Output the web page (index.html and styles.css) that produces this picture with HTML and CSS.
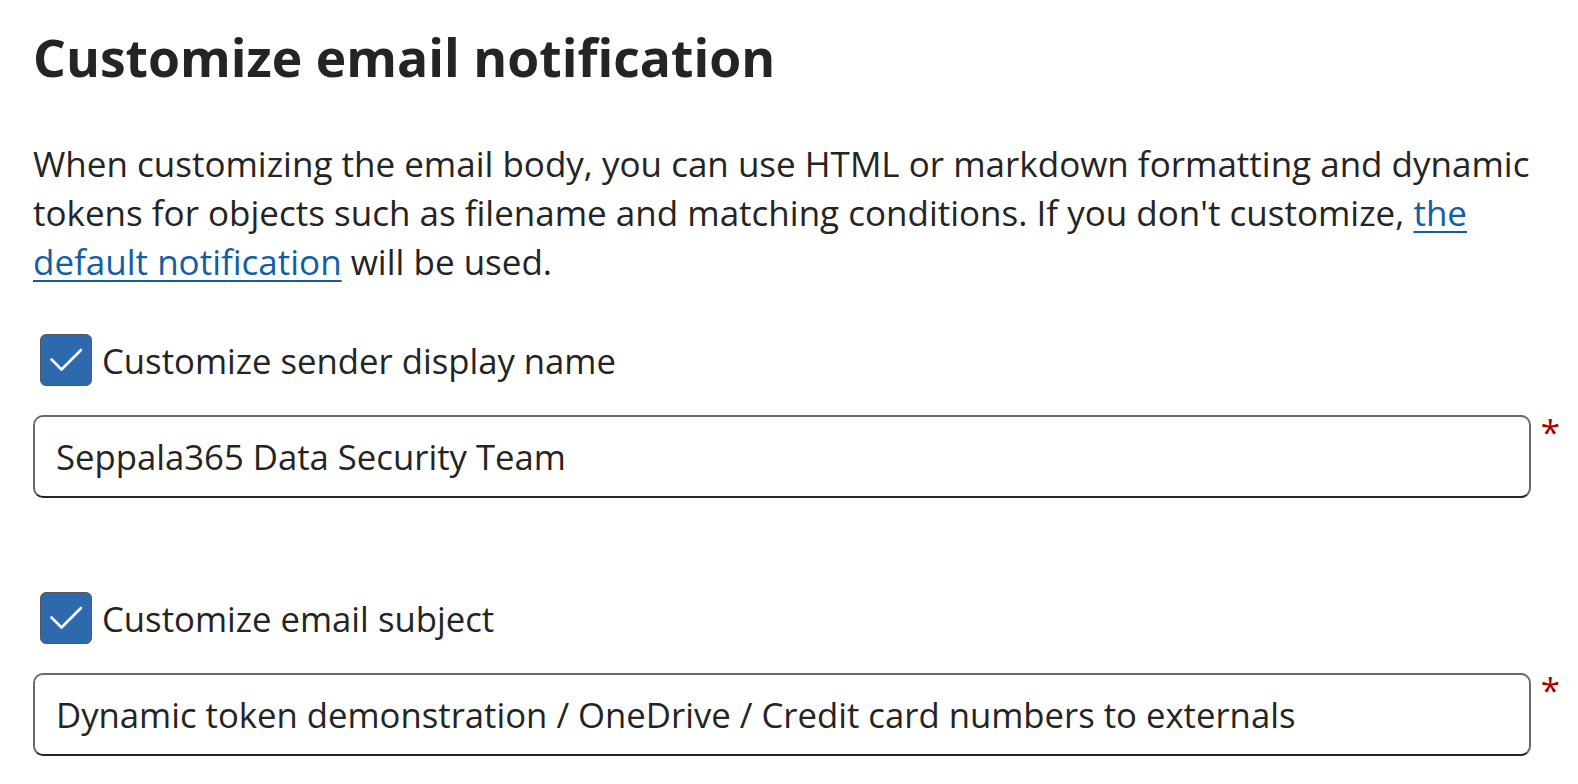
FILE: index.html
```html
<!DOCTYPE html>
<html lang="en">
<head>
<meta charset="utf-8">
<title>Customize email notification</title>
<link rel="stylesheet" href="styles.css">
</head>
<body>
<main class="page">
  <h1 class="title">Customize email notification</h1>
  <p class="intro">When customizing the email body, you can use HTML or markdown formatting and dynamic tokens for objects such as filename and matching conditions. If you don't customize, <a class="link" href="#">the</a> <a class="link" href="#">default notification</a> will be used.</p>

  <label class="check-row">
    <span class="checkbox">
      <svg viewBox="0 0 52 52" width="52" height="52" aria-hidden="true"><path d="M11.5 25.5 L21.5 35.5 L41 16" fill="none" stroke="#ffffff" stroke-width="2.6" stroke-linecap="round" stroke-linejoin="round"/></svg>
    </span>
    <span class="check-label">Customize sender display name</span>
  </label>
  <div class="field">
    <div class="input">Seppala365 Data Security Team</div>
    <span class="required">*</span>
  </div>

  <label class="check-row check-row-second">
    <span class="checkbox">
      <svg viewBox="0 0 52 52" width="52" height="52" aria-hidden="true"><path d="M11.5 25.5 L21.5 35.5 L41 16" fill="none" stroke="#ffffff" stroke-width="2.6" stroke-linecap="round" stroke-linejoin="round"/></svg>
    </span>
    <span class="check-label">Customize email subject</span>
  </label>
  <div class="field">
    <div class="input">Dynamic token demonstration / OneDrive / Credit card numbers to externals</div>
    <span class="required">*</span>
  </div>
</main>
</body>
</html>
```
FILE: styles.css
```css
html, body {
  margin: 0;
  padding: 0;
  background: #ffffff;
}

body {
  font-family: "Open Sans", "Noto Sans", sans-serif;
  color: #242424;
}

.page {
  padding: 22px 18px 0 33px;
}

.title {
  margin: 0;
  font-size: 51.7px;
  line-height: 70px;
  font-weight: 700;
  color: #242424;
}

.intro {
  margin: 47px 0 0;
  font-size: 35px;
  line-height: 49px;
  font-weight: 400;
}

.link {
  color: #115ea3;
  text-decoration: underline;
  text-decoration-thickness: 2px;
  text-underline-offset: 5px;
}

.check-row {
  display: flex;
  align-items: center;
  gap: 10px;
  margin-top: 48px;
  padding-left: 7px;
  height: 52px;
}

.check-row-second {
  margin-top: 94px;
}

.checkbox {
  flex: 0 0 auto;
  width: 52px;
  height: 52px;
  box-sizing: border-box;
  border: 1.5px solid #585858;
  border-radius: 6px;
  background: #2f69ad;
  display: flex;
  align-items: center;
  justify-content: center;
  overflow: hidden;
}

.checkbox svg {
  display: block;
  flex: 0 0 auto;
}

.check-label {
  font-size: 34.7px;
  line-height: 49px;
}

.field {
  display: flex;
  align-items: flex-start;
  margin-top: 29px;
}

.input {
  flex: 1 1 auto;
  height: 83px;
  box-sizing: border-box;
  border: 2px solid #6a6a6a;
  border-bottom-color: #262626;
  border-radius: 10px;
  padding: 0 21px;
  display: flex;
  align-items: center;
  font-size: 34.7px;
  line-height: 49px;
  color: #242424;
  white-space: nowrap;
  overflow: hidden;
}

.required {
  flex: 0 0 18px;
  margin-left: 10px;
  margin-top: -1px;
  font-size: 35px;
  line-height: 35px;
  color: #a80000;
}
```
